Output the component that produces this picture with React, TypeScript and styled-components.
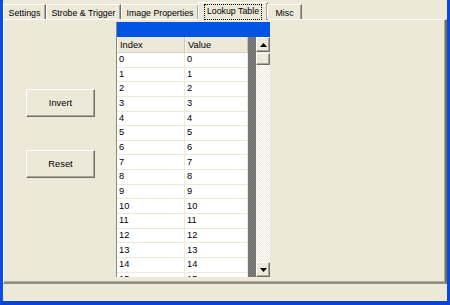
import styled, { createGlobalStyle } from 'styled-components';

const GlobalStyle = createGlobalStyle`
  html, body {
    margin: 0;
    padding: 0;
    background: #ece9d8;
    overflow: hidden;
  }
  * {
    box-sizing: border-box;
  }
`;

const tabs = [
  { label: 'Settings', width: 43 },
  { label: 'Strobe & Trigger', width: 75 },
  { label: 'Image Properties', width: 78 },
  { label: 'Lookup Table', width: 70 },
  { label: 'Misc', width: 35 },
];
const activeTab = 'Lookup Table';
// rows 0..15, the last one is cut by the grid's bottom edge
const rows = Array.from({ length: 16 }, (_, i) => i);

function Arrow({ up }: { up?: boolean }) {
  return (
    <svg width="7" height="4" viewBox="0 0 7 4">
      <polygon points={up ? '3.5,0 7,4 0,4' : '0,0 7,0 3.5,4'} fill="#000" />
    </svg>
  );
}

function App() {
  return (
    <>
      <GlobalStyle />
      <Styled.Window>
        <Styled.TabStrip>
          {tabs.map((t) => (
            <Styled.Tab key={t.label} $width={t.width} $active={t.label === activeTab}>
              {t.label === activeTab ? <Styled.Focus>{t.label}</Styled.Focus> : t.label}
            </Styled.Tab>
          ))}
        </Styled.TabStrip>

        <Styled.Panel>
          <Styled.Actions>
            <Styled.Button>Invert</Styled.Button>
            <Styled.Button>Reset</Styled.Button>
          </Styled.Actions>

          <Styled.Grid>
            <Styled.Caption />
            <Styled.Body>
              <Styled.Table>
                <Styled.HeaderRow>
                  <Styled.HeaderCell>Index</Styled.HeaderCell>
                  <Styled.HeaderCell>Value</Styled.HeaderCell>
                </Styled.HeaderRow>
                {rows.map((r) => (
                  <Styled.Row key={r}>
                    <Styled.Cell>{r}</Styled.Cell>
                    <Styled.Cell>{r}</Styled.Cell>
                  </Styled.Row>
                ))}
              </Styled.Table>
              <Styled.Gutter />
              <Styled.Scrollbar>
                <Styled.ScrollButton>
                  <Arrow up />
                </Styled.ScrollButton>
                <Styled.Thumb />
                <Styled.Track />
                <Styled.ScrollButton>
                  <Arrow />
                </Styled.ScrollButton>
              </Styled.Scrollbar>
            </Styled.Body>
          </Styled.Grid>
        </Styled.Panel>

        <Styled.Status />
      </Styled.Window>
    </>
  );
}

export default App;

const font = `
  font-family: 'Liberation Sans', Arial, sans-serif;
  font-size: 9.3px;
  color: #000;
`;

const dither = (a: string, b: string) => `
  background: repeating-conic-gradient(${a} 0 25%, ${b} 0 50%) 0 0 / 2px 2px;
`;

const Styled = {
  Window: styled.div`
    width: 450px;
    height: 305px;
    display: flex;
    flex-direction: column;
    background: #ece9d8;
    border-left: 3px solid #0b4fe0;
    border-right: 3px solid #0b47d8;
    border-bottom: 4px solid #0842d8;
    ${font};
  `,
  TabStrip: styled.div`
    flex: none;
    height: 19px;
    display: flex;
    align-items: flex-end;
    position: relative;
    z-index: 1;
  `,
  Tab: styled.div<{ $active?: boolean; $width: number }>`
    flex: none;
    width: ${(p) => p.$width}px;
    display: flex;
    align-items: center;
    justify-content: center;
    white-space: nowrap;
    font-size: 8.8px;
    height: ${(p) => (p.$active ? '18px' : '15px')};
    padding-top: 1px;
    margin: ${(p) => (p.$active ? '0 -1px -1px -1px' : '0')};
    background: #ece9d8;
    border-top: 1px solid #fff;
    border-left: 1px solid #fff;
    border-right: 1px solid #716f64;
    box-shadow: inset -1px 0 0 #aca899;
  `,
  Focus: styled.span`
    display: inline-block;
    padding: 1px 2px 2px;
    outline: 1px dotted #000;
    line-height: 11px;
  `,
  Panel: styled.div`
    flex: none;
    height: 265px;
    display: flex;
    align-items: flex-start;
    border-top: 1px solid #fff;
    border-left: 1px solid #fff;
    border-right: 2px solid #716f64;
    border-bottom: 2px solid #918e7f;
    box-shadow: inset -1px -1px 0 #aca899;
  `,
  Actions: styled.div`
    width: 112px;
    display: flex;
    flex-direction: column;
    gap: 33px;
    padding: 69px 0 0 22px;
  `,
  Button: styled.button`
    width: 69px;
    height: 28px;
    padding: 0;
    background: #ece9d8;
    border: 1px solid;
    border-color: #fff #716f64 #716f64 #fff;
    box-shadow: inset -1px -1px 0 #aca899;
    ${font};
  `,
  Grid: styled.div`
    margin-top: 2px;
    width: 154px;
    height: 255px;
    display: flex;
    flex-direction: column;
    border-left: 1px solid #8c8a80;
    overflow: hidden;
  `,
  Caption: styled.div`
    flex: none;
    height: 15px;
    background: #0054e3;
  `,
  Body: styled.div`
    flex: 1;
    min-height: 0;
    display: flex;
  `,
  Table: styled.div`
    width: 131px;
    overflow: hidden;
    background: #fff;
  `,
  HeaderRow: styled.div`
    display: grid;
    grid-template-columns: 68px 63px;
    height: 16px;
    background: #ece9d8;
    border-bottom: 1px solid #d8d4c4;
  `,
  HeaderCell: styled.div`
    display: flex;
    align-items: center;
    padding-left: 3px;
    border-right: 1px solid #c7c4b3;
    box-shadow: inset 1px 0 0 #fff;
  `,
  Row: styled.div`
    display: grid;
    grid-template-columns: 68px 63px;
    height: 14.65px;
    border-bottom: 1px solid #ece9d8;
  `,
  Cell: styled.div`
    display: flex;
    align-items: center;
    padding-left: 2px;
    border-right: 1px solid #ece9d8;
    line-height: 1;
  `,
  Gutter: styled.div`
    width: 8px;
    ${dither('#808080', '#6e6e6e')};
  `,
  Scrollbar: styled.div`
    width: 14px;
    display: flex;
    flex-direction: column;
  `,
  ScrollButton: styled.div`
    flex: none;
    height: 15px;
    display: flex;
    align-items: center;
    justify-content: center;
    background: #ece9d8;
    border: 1px solid;
    border-color: #fff #716f64 #716f64 #fff;
    box-shadow: inset -1px -1px 0 #aca899;
  `,
  Thumb: styled.div`
    flex: none;
    height: 12px;
    margin-top: 1px;
    background: #ece9d8;
    border: 1px solid;
    border-color: #fff #716f64 #716f64 #fff;
    box-shadow: inset -1px -1px 0 #aca899;
  `,
  Track: styled.div`
    flex: 1;
    ${dither('#ffffff', '#ece9d8')};
  `,
  Status: styled.div`
    flex: 1;
    background: #ece9d8;
  `,
};
